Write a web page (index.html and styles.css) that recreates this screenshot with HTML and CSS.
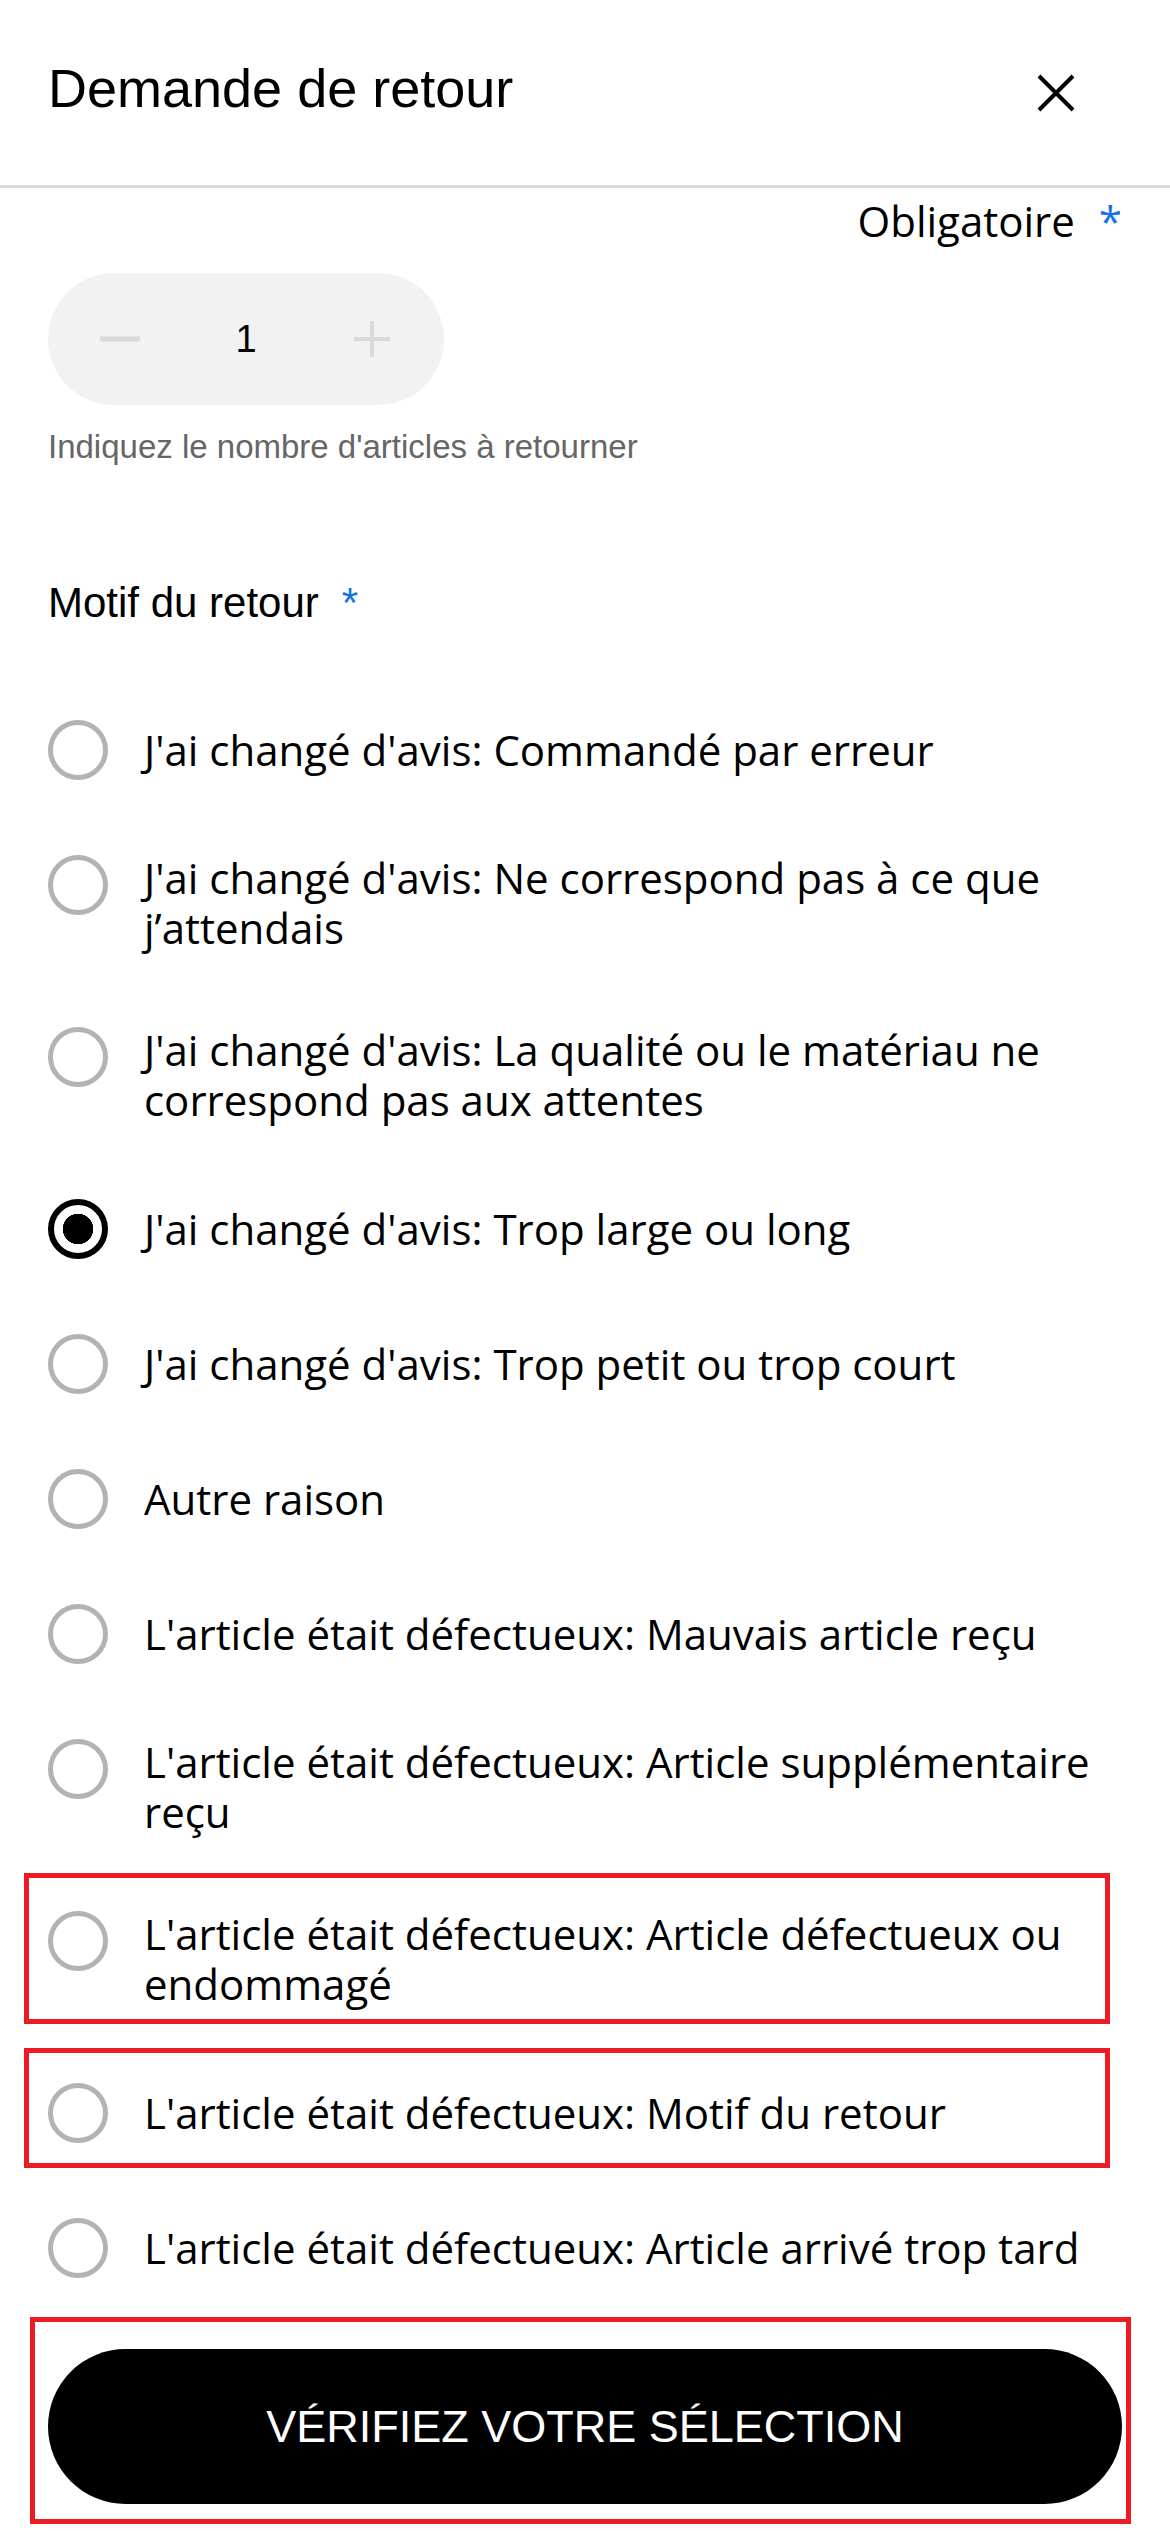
FILE: index.html
```html
<!DOCTYPE html>
<html lang="fr">
<head>
  <meta charset="UTF-8" />
  <meta name="viewport" content="width=device-width, initial-scale=1.0" />
  <title>Demande de retour</title>
  <link rel="stylesheet" href="styles.css">
</head>
<body>
  <header class="sheet-head">
    <h1>Demande de retour</h1>
    <button type="button" class="close" aria-label="Fermer">
      <svg width="38" height="38" viewBox="0 0 38 38"><path d="M2 2L36 36M36 2L2 36" stroke="#000" stroke-width="4" fill="none"/></svg>
    </button>
  </header>

  <main class="sheet-body">
    <p class="required-note">Obligatoire<span class="star">*</span></p>

    <div class="stepper">
      <button type="button" class="step" aria-label="Moins">
        <svg width="40" height="40" viewBox="0 0 40 40"><path d="M0 20H40" stroke="#d9d9d9" stroke-width="5"/></svg>
      </button>
      <span class="qty">1</span>
      <button type="button" class="step" aria-label="Plus">
        <svg width="40" height="40" viewBox="0 0 40 40"><path d="M2 20H38M20 2V38" stroke="#d9d9d9" stroke-width="4"/></svg>
      </button>
    </div>
    <p class="hint">Indiquez le nombre d'articles à retourner</p>

    <div class="reasons-title">Motif du retour<span class="star">*</span></div>

    <div class="reason-list">
      <label class="reason"><input type="radio" name="motif" class="radio"><span class="reason-text">J'ai changé d'avis: Commandé par erreur</span></label>
      <label class="reason"><input type="radio" name="motif" class="radio"><span class="reason-text">J'ai changé d'avis: Ne correspond pas à ce que j’attendais</span></label>
      <label class="reason"><input type="radio" name="motif" class="radio"><span class="reason-text">J'ai changé d'avis: La qualité ou le matériau ne correspond pas aux attentes</span></label>
      <label class="reason"><input type="radio" name="motif" class="radio" checked><span class="reason-text">J'ai changé d'avis: Trop large ou long</span></label>
      <label class="reason"><input type="radio" name="motif" class="radio"><span class="reason-text">J'ai changé d'avis: Trop petit ou trop court</span></label>
      <label class="reason"><input type="radio" name="motif" class="radio"><span class="reason-text">Autre raison</span></label>
      <label class="reason"><input type="radio" name="motif" class="radio"><span class="reason-text">L'article était défectueux: Mauvais article reçu</span></label>
      <label class="reason"><input type="radio" name="motif" class="radio"><span class="reason-text">L'article était défectueux: Article supplémentaire reçu</span></label>
      <label class="reason flagged flag-tall"><input type="radio" name="motif" class="radio"><span class="reason-text">L'article était défectueux: Article défectueux ou endommagé</span></label>
      <label class="reason flagged flag-short"><input type="radio" name="motif" class="radio"><span class="reason-text">L'article était défectueux: Motif du retour</span></label>
      <label class="reason"><input type="radio" name="motif" class="radio"><span class="reason-text">L'article était défectueux: Article arrivé trop tard</span></label>
    </div>

    <div class="submit-wrap flagged">
      <button type="button" class="submit">VÉRIFIEZ VOTRE SÉLECTION</button>
    </div>
  </main>
</body>
</html>
```

FILE: styles.css
```css
body {
  margin: 0;
  background: #fff;
  color: #000;
  font-family: "Open Sans", "Noto Sans", sans-serif;
}
button {
  font-family: inherit;
  cursor: pointer;
}
.sheet-head {
  height: 185px;
  border-bottom: 3px solid #d9d9d9;
  display: flex;
  align-items: center;
  justify-content: space-between;
  padding: 0 95px 0 48px;
}
.sheet-head h1 {
  margin: -8px 0 0;
  font: 400 54px/1.15 "Liberation Sans", Arial, sans-serif;
}
.close {
  border: 0;
  background: none;
  padding: 0;
  width: 38px;
  height: 38px;
  display: flex;
}
.sheet-body {
  padding: 8px 48px 27px;
}
.required-note {
  margin: 0;
  text-align: right;
  font-size: 42px;
  line-height: 50px;
}
.star {
  color: #1473e6;
  margin-left: 24px;
}
.stepper {
  margin-top: 27px;
  width: 396px;
  height: 132px;
  box-sizing: border-box;
  padding: 0 52px;
  border-radius: 66px;
  background: #f2f2f2;
  display: flex;
  align-items: center;
  justify-content: space-between;
}
.step {
  border: 0;
  background: none;
  padding: 0;
  width: 40px;
  height: 40px;
  display: flex;
}
.qty {
  font: 38px "Liberation Sans", Arial, sans-serif;
}
.hint {
  margin: 22px 0 0;
  font: 33px/40px "Liberation Sans", Arial, sans-serif;
  color: #666;
}
.reasons-title {
  margin-top: 111px;
  font: 42px/50px "Liberation Sans", Arial, sans-serif;
}
.reasons-title .star {
  margin-left: 23px;
}
.reason-list {
  margin-top: 55px;
}
.reason {
  position: relative;
  display: flex;
  align-items: flex-start;
  gap: 36px;
  padding: 37px 0;
  cursor: pointer;
}
.radio {
  appearance: none;
  -webkit-appearance: none;
  flex: none;
  width: 60px;
  height: 60px;
  margin: 0;
  box-sizing: border-box;
  border: 5px solid #b3b3b3;
  border-radius: 50%;
  background: #fff;
}
.radio:checked {
  border: 6px solid #000;
  background: radial-gradient(circle, #000 0 15px, #fff 15.5px);
}
.reason-text {
  display: flex;
  align-items: center;
  min-height: 63px;
  margin-top: -2px;
  font-size: 42px;
  line-height: 50px;
}

/* annotation frames */
.flagged::after {
  content: "";
  position: absolute;
  left: -24px;
  right: 12px;
  top: 0;
  bottom: 14px;
  border: 5px solid #ed1c24;
  pointer-events: none;
}
.flag-tall::after {
  top: -1px;
  bottom: 22px;
}
.flag-short::after {
  top: 2px;
  bottom: 13px;
}
.submit-wrap {
  position: relative;
  margin-top: 33px;
}
.submit-wrap.flagged::after {
  left: -18px;
  right: -9px;
  top: -32px;
  bottom: -20px;
}
.submit {
  display: block;
  width: 100%;
  height: 155px;
  border: 0;
  border-radius: 78px;
  background: #000;
  color: #fff;
  font: 45px "Liberation Sans", Arial, sans-serif;
}
```
